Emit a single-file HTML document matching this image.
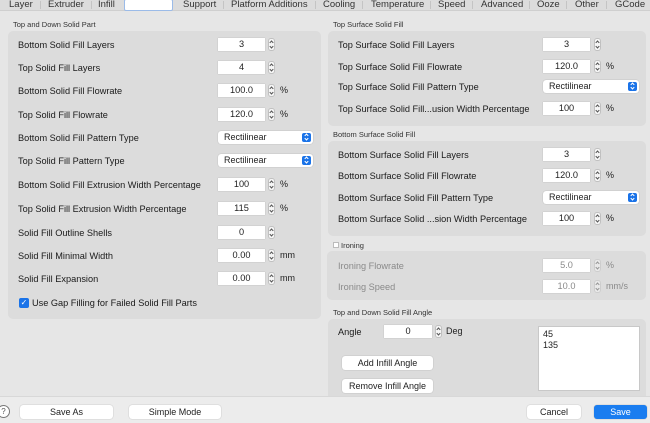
<!DOCTYPE html><html><head><style>
*{box-sizing:border-box;margin:0;padding:0}
body{width:650px;height:423px;background:#e6e6e6;font-family:"Liberation Sans",sans-serif;font-size:9px;color:#222;position:relative;overflow:hidden}
div,span{position:absolute}
.tabs{left:0;top:0;width:650px;height:11px;background:#dcdcdc;border-bottom:1px solid #cfcfcf}
.t{top:-1px;font-size:9.5px;color:#333}
.sep{top:1px;width:1px;height:8px;background:#c4c4c4}
.ttl{font-size:7.5px;color:#333}
.box{background:#dcdcdc;border-radius:5px}
.lb{font-size:9.2px;color:#1a1a1a;line-height:11px}
.in{height:13px;background:#fff;text-align:center;line-height:13px;font-size:9.2px;box-shadow:0 0 1px #aaa}
.st{width:7px;height:13px;border:1px solid #c0c0c0;border-radius:3px;background:#f6f6f6}
.st:before{content:"";position:absolute;left:1px;top:2px;width:2px;height:2px;border-left:1px solid #555;border-top:1px solid #555;transform:rotate(45deg)}
.st:after{content:"";position:absolute;left:1px;top:6px;width:2px;height:2px;border-right:1px solid #555;border-bottom:1px solid #555;transform:rotate(45deg)}
.u{line-height:13px}
.pp{height:13px;background:#fff;border-radius:3px;box-shadow:0 0 1px #999;line-height:13px;padding-left:6px}
.pp i{position:absolute;right:2px;top:2px;width:9px;height:9px;background:#1a73e8;border-radius:2px}
.pp i:before{content:"";position:absolute;left:3px;top:1px;width:2px;height:2px;border-left:1px solid #fff;border-top:1px solid #fff;transform:rotate(45deg)}
.pp i:after{content:"";position:absolute;left:3px;top:4px;width:2px;height:2px;border-right:1px solid #fff;border-bottom:1px solid #fff;transform:rotate(45deg)}
.g{color:#8a8a8a}
.btn{background:#fff;border-radius:3px;box-shadow:0 0 1px #999;text-align:center;height:14px;line-height:14px;font-size:9px}
</style></head><body>
<div class="tabs">
<span class="t" style="left:9px">Layer</span><div class="sep" style="left:40px"></div>
<span class="t" style="left:48px">Extruder</span><div class="sep" style="left:91px"></div>
<span class="t" style="left:98px">Infill</span>
<div style="left:124px;top:-1px;width:49px;height:12px;background:#fff;border:1px solid #9bbbe8;border-radius:2px"></div>
<span class="t" style="left:183px">Support</span><div class="sep" style="left:223px"></div>
<span class="t" style="left:231px">Platform Additions</span><div class="sep" style="left:315px"></div>
<span class="t" style="left:323px">Cooling</span><div class="sep" style="left:362px"></div>
<span class="t" style="left:371px">Temperature</span><div class="sep" style="left:430px"></div>
<span class="t" style="left:438px">Speed</span><div class="sep" style="left:472px"></div>
<span class="t" style="left:481px">Advanced</span><div class="sep" style="left:529px"></div>
<span class="t" style="left:537px">Ooze</span><div class="sep" style="left:566px"></div>
<span class="t" style="left:575px">Other</span><div class="sep" style="left:606px"></div>
<span class="t" style="left:615px">GCode</span>
</div>

<span class="ttl" style="left:13px;top:20px">Top and Down Solid Part</span>
<div class="box" style="left:8px;top:31px;width:313px;height:288px"></div>
<span class="lb" style="left:18px;top:40px">Bottom Solid Fill Layers</span><div class="in" style="left:218px;top:38px;width:47px">3</div><div class="st" style="left:268px;top:38px"></div>
<span class="lb" style="left:18px;top:63px">Top Solid Fill Layers</span><div class="in" style="left:218px;top:61px;width:47px">4</div><div class="st" style="left:268px;top:61px"></div>
<span class="lb" style="left:18px;top:86px">Bottom Solid Fill Flowrate</span><div class="in" style="left:218px;top:84px;width:47px">100.0</div><div class="st" style="left:268px;top:84px"></div><span class="u" style="left:280px;top:84px">%</span>
<span class="lb" style="left:18px;top:110px">Top Solid Fill Flowrate</span><div class="in" style="left:218px;top:108px;width:47px">120.0</div><div class="st" style="left:268px;top:108px"></div><span class="u" style="left:280px;top:108px">%</span>
<span class="lb" style="left:18px;top:133px">Bottom Solid Fill Pattern Type</span><div class="pp" style="left:218px;top:131px;width:95px">Rectilinear<i></i></div>
<span class="lb" style="left:18px;top:156px">Top Solid Fill Pattern Type</span><div class="pp" style="left:218px;top:154px;width:95px">Rectilinear<i></i></div>
<span class="lb" style="left:18px;top:180px">Bottom Solid Fill Extrusion Width Percentage</span><div class="in" style="left:218px;top:178px;width:47px">100</div><div class="st" style="left:268px;top:178px"></div><span class="u" style="left:280px;top:178px">%</span>
<span class="lb" style="left:18px;top:204px">Top Solid Fill Extrusion Width Percentage</span><div class="in" style="left:218px;top:202px;width:47px">115</div><div class="st" style="left:268px;top:202px"></div><span class="u" style="left:280px;top:202px">%</span>
<span class="lb" style="left:18px;top:228px">Solid Fill Outline Shells</span><div class="in" style="left:218px;top:226px;width:47px">0</div><div class="st" style="left:268px;top:226px"></div>
<span class="lb" style="left:18px;top:251px">Solid Fill Minimal Width</span><div class="in" style="left:218px;top:249px;width:47px">0.00</div><div class="st" style="left:268px;top:249px"></div><span class="u" style="left:280px;top:249px">mm</span>
<span class="lb" style="left:18px;top:274px">Solid Fill Expansion</span><div class="in" style="left:218px;top:272px;width:47px">0.00</div><div class="st" style="left:268px;top:272px"></div><span class="u" style="left:280px;top:272px">mm</span>
<div style="left:19px;top:298px;width:10px;height:10px;background:#1a73e8;border-radius:2px;color:#fff;font-size:8px;line-height:10px;text-align:center">✓</div>
<span class="lb" style="left:32px;top:298px">Use Gap Filling for Failed Solid Fill Parts</span>

<span class="ttl" style="left:333px;top:20px">Top Surface Solid Fill</span>
<div class="box" style="left:328px;top:31px;width:318px;height:95px"></div>
<span class="lb" style="left:338px;top:40px">Top Surface Solid Fill Layers</span><div class="in" style="left:543px;top:38px;width:47px">3</div><div class="st" style="left:594px;top:38px"></div>
<span class="lb" style="left:338px;top:62px">Top Surface Solid Fill Flowrate</span><div class="in" style="left:543px;top:60px;width:47px">120.0</div><div class="st" style="left:594px;top:60px"></div><span class="u" style="left:606px;top:60px">%</span>
<span class="lb" style="left:338px;top:82px">Top Surface Solid Fill Pattern Type</span><div class="pp" style="left:543px;top:80px;width:96px">Rectilinear<i></i></div>
<span class="lb" style="left:338px;top:104px">Top Surface Solid Fill...usion Width Percentage</span><div class="in" style="left:543px;top:102px;width:47px">100</div><div class="st" style="left:594px;top:102px"></div><span class="u" style="left:606px;top:102px">%</span>

<span class="ttl" style="left:333px;top:130px">Bottom Surface Solid Fill</span>
<div class="box" style="left:328px;top:141px;width:318px;height:95px"></div>
<span class="lb" style="left:338px;top:150px">Bottom Surface Solid Fill Layers</span><div class="in" style="left:543px;top:148px;width:47px">3</div><div class="st" style="left:594px;top:148px"></div>
<span class="lb" style="left:338px;top:171px">Bottom Surface Solid Fill Flowrate</span><div class="in" style="left:543px;top:169px;width:47px">120.0</div><div class="st" style="left:594px;top:169px"></div><span class="u" style="left:606px;top:169px">%</span>
<span class="lb" style="left:338px;top:193px">Bottom Surface Solid Fill Pattern Type</span><div class="pp" style="left:543px;top:191px;width:96px">Rectilinear<i></i></div>
<span class="lb" style="left:338px;top:214px">Bottom Surface Solid ...sion Width Percentage</span><div class="in" style="left:543px;top:212px;width:47px">100</div><div class="st" style="left:594px;top:212px"></div><span class="u" style="left:606px;top:212px">%</span>

<div style="left:333px;top:242px;width:6px;height:6px;background:#fff;border:1px solid #bbb"></div>
<span class="ttl" style="left:341px;top:241px">Ironing</span>
<div class="box" style="left:327px;top:251px;width:319px;height:49px"></div>
<span class="lb g" style="left:338px;top:261px">Ironing Flowrate</span><div class="in g" style="left:543px;top:259px;width:47px">5.0</div><div class="st" style="left:594px;top:259px;opacity:.5"></div><span class="u g" style="left:606px;top:259px">%</span>
<span class="lb g" style="left:338px;top:282px">Ironing Speed</span><div class="in g" style="left:543px;top:280px;width:47px">10.0</div><div class="st" style="left:594px;top:280px;opacity:.5"></div><span class="u g" style="left:606px;top:280px">mm/s</span>

<span class="ttl" style="left:333px;top:308px">Top and Down Solid Fill Angle</span>
<div class="box" style="left:328px;top:319px;width:318px;height:78px;border-radius:5px 5px 0 0"></div>
<span class="lb" style="left:338px;top:327px">Angle</span><div class="in" style="left:384px;top:325px;width:48px">0</div><div class="st" style="left:435px;top:325px"></div><span class="u" style="left:446px;top:325px">Deg</span>
<div style="left:538px;top:326px;width:102px;height:65px;background:#fff;border:1px solid #c8c8c8;padding:2px 4px;line-height:11px">45<br>135</div>
<div class="btn" style="left:342px;top:356px;width:91px">Add Infill Angle</div>
<div class="btn" style="left:342px;top:379px;width:91px">Remove Infill Angle</div>

<div style="left:0;top:396px;width:650px;height:27px;background:#ececec;border-top:1px solid #d8d8d8"></div>
<div style="left:-3px;top:405px;width:13px;height:13px;border:1px solid #777;border-radius:50%;text-align:center;line-height:11px;font-size:8px;color:#555;background:#fff">?</div>
<div class="btn" style="left:20px;top:405px;width:93px">Save As</div>
<div class="btn" style="left:129px;top:405px;width:92px">Simple Mode</div>
<div class="btn" style="left:527px;top:405px;width:54px">Cancel</div>
<div class="btn" style="left:594px;top:405px;width:53px;background:#1a7df0;color:#fff">Save</div>
</body></html>
